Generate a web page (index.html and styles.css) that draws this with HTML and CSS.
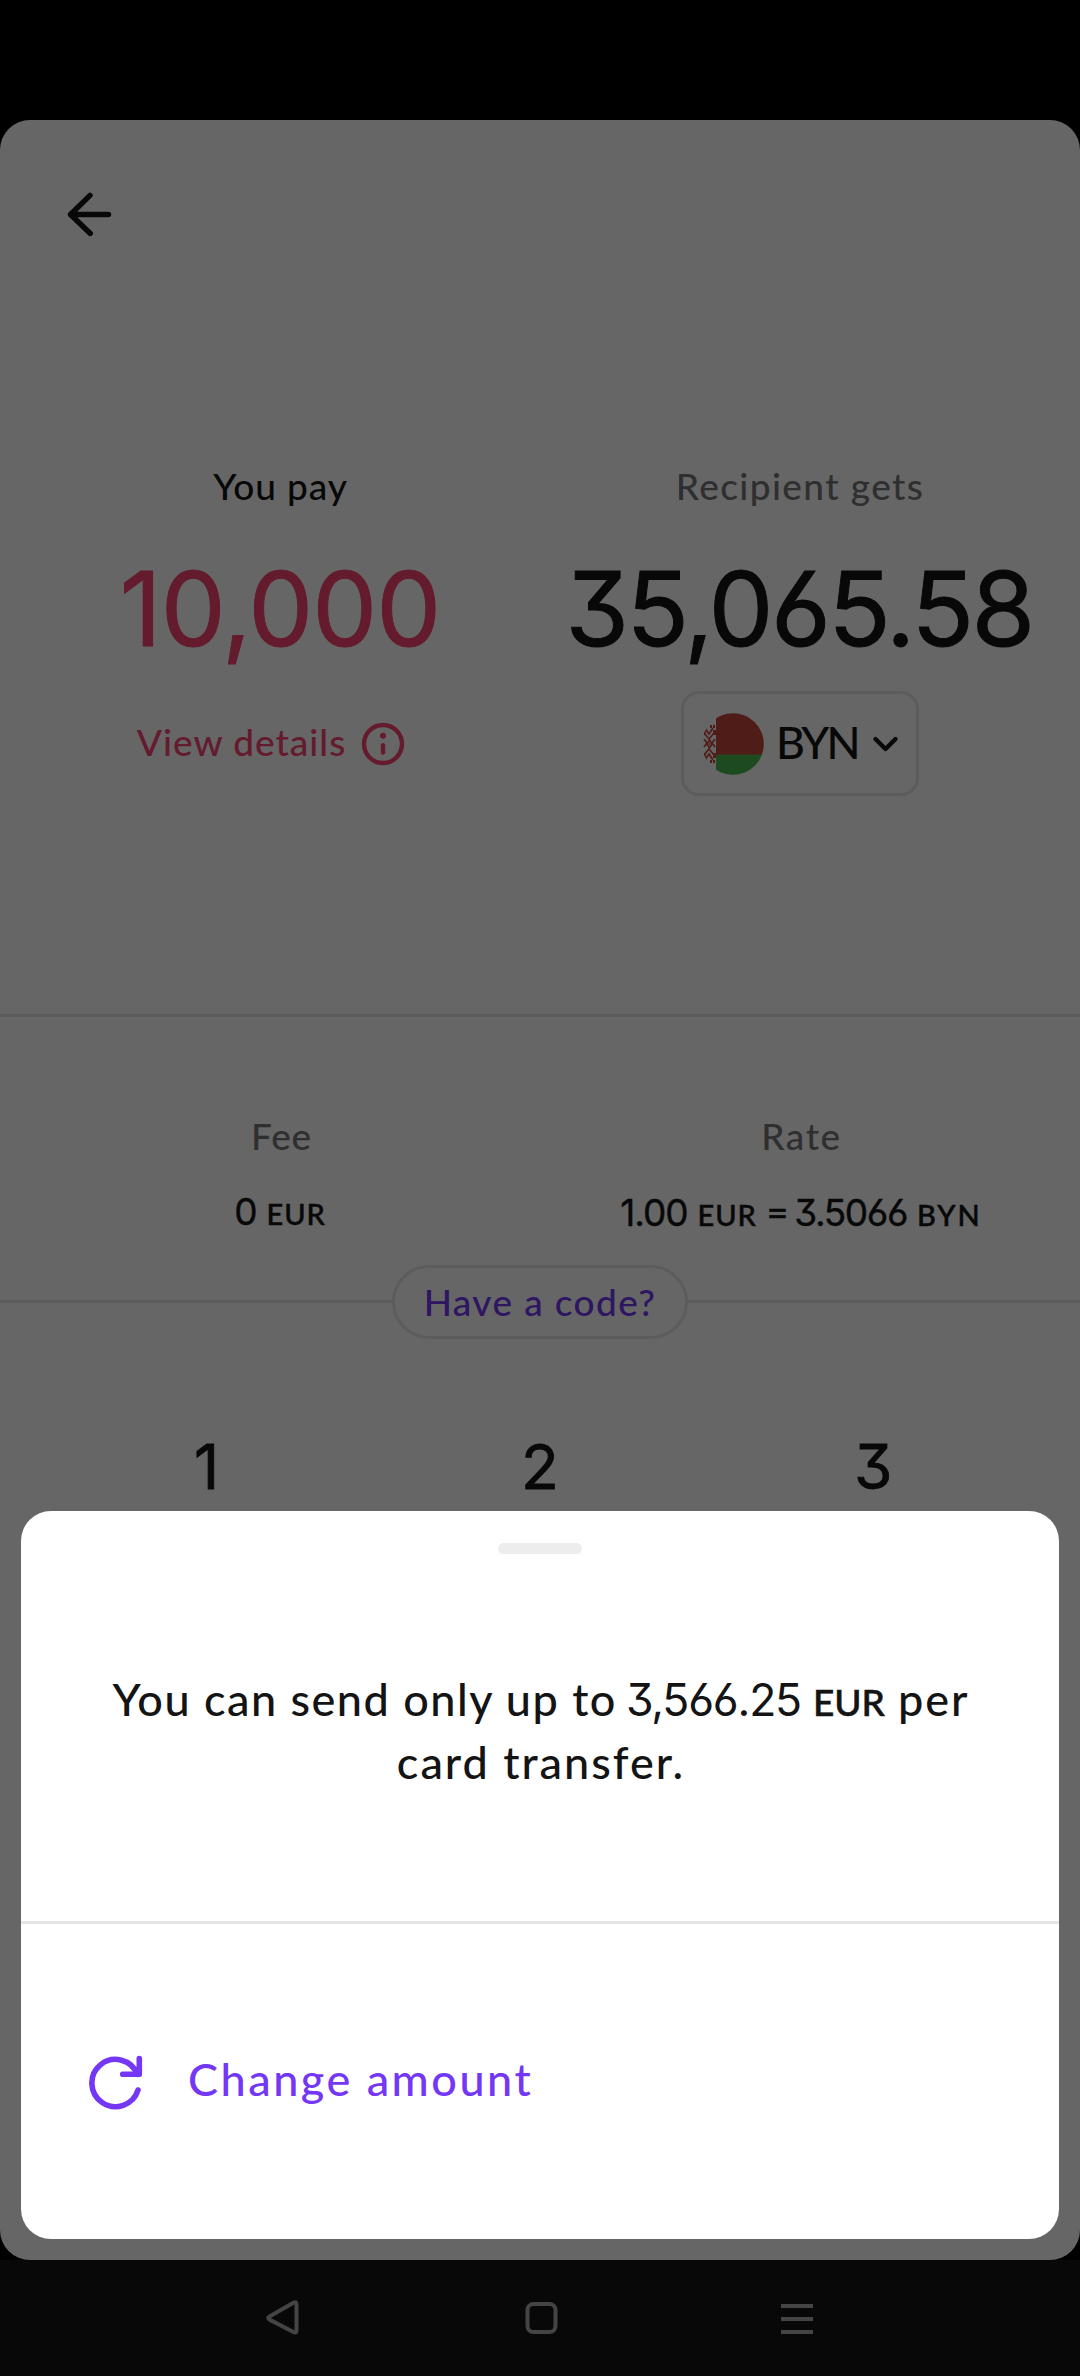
FILE: index.html
```html
<!DOCTYPE html>
<html lang="en">
<head>
<meta charset="utf-8">
<title>Send money</title>
<link rel="stylesheet" href="styles.css">
</head>
<body>
<div class="phone">
  <main class="screen">
    <header class="header">
      <svg class="back" width="48" height="48" viewBox="0 0 48 48"><path d="M42.5 23.5H4.5M24 4.3 4.5 23.5 24.3 42.5"/></svg>
    </header>

    <section class="columns amounts">
      <div class="column">
        <div class="label label-dark you-pay">You pay</div>
        <div class="amount amount-error">10,000</div>
        <div class="details">
          <span class="details-text">View details</span>
          <svg width="44" height="44" viewBox="0 0 44 44"><circle cx="22" cy="22" r="19" fill="none" stroke="currentColor" stroke-width="4.4"/><circle cx="22" cy="13.8" r="3" fill="currentColor"/><path d="M22 23.2v7.4" stroke="currentColor" stroke-width="4.4" stroke-linecap="round"/></svg>
        </div>
      </div>
      <div class="column">
        <div class="label recipient">Recipient gets</div>
        <div class="amount amount-long">35,065.58</div>
        <div class="currency">
          <svg width="62" height="62" viewBox="0 0 62 62">
            <clipPath id="round"><circle cx="31" cy="31" r="30.8"/></clipPath>
            <g clip-path="url(#round)">
              <path fill="#fff" d="M0 0h14v62H0z"/>
              <path fill="#c8463a" d="M14 0h48v42H14z"/>
              <path fill="#4bb852" d="M14 41.6h48V62H14z"/>
              <g fill="none" stroke="#c8463a" stroke-width="1.7">
                <path d="M2 20l5 6 5-6M2 42l5-6 5 6M2 26l3 4-3 4M13 26l-3 4 3 4M3 15l4 6 4-6M3 47l4-6 4 6"/>
                <path d="M7.500 27l2.500 4-2.500 4-2.500-4z"/>
              </g>
              <path fill="#c8463a" d="M8 12h2v3H8zM11 12h2v3h-2zM8 47h2v3H8zM11 47h2v3h-2zM2 17h2v5H2zM11 17h3v5h-3zM2 40h2v5H2zM11 40h3v5h-3zM6.700 30.200h1.600v1.600H6.700z"/>
            </g>
          </svg>
          <span class="currency-code">BYN</span>
          <svg class="chevron" width="28" height="20" viewBox="0 0 28 20"><path d="M3.500 5 13.500 15 23.500 5"/></svg>
        </div>
      </div>
    </section>

    <section class="columns summary">
      <div class="column">
        <div class="label fee">Fee</div>
        <div class="value"><span class="num">0</span><span class="unit unit-eur">EUR</span></div>
      </div>
      <div class="column">
        <div class="label rate">Rate</div>
        <div class="value value-rate"><span class="num">1.00</span><span class="unit unit-eur">EUR</span><span class="equals">=</span><span class="num num-tight">3.5066</span><span class="unit unit-byn">BYN</span></div>
      </div>
    </section>

    <div class="code-row"><div class="rule"></div><div class="code">Have a code?</div><div class="rule"></div></div>

    <div class="keys"><span>1</span><span>2</span><span>3</span></div>
  </main>

  <nav class="nav">
    <svg width="40" height="40" viewBox="0 0 40 40"><path d="M6.500 18.400 30.500 4.700q3-1.500 3 1.500V32.500q0 3-3 1.500L6.500 21.600q-2.500-1.600 0-3.200z"/></svg>
    <svg width="40" height="40" viewBox="0 0 40 40"><rect x="7.500" y="6" width="28" height="28" rx="6"/></svg>
    <svg width="40" height="40" viewBox="0 0 40 40"><path d="M4 8h32M4 21h32M4 34h32"/></svg>
  </nav>

  <div class="scrim"></div>

  <div class="sheet">
    <div class="handle"></div>
    <div class="message">
      <div class="line"><span class="line-text">You can send only up to</span><span class="line-num">3,566.25</span><span class="line-unit">EUR</span><span class="line-per">per</span></div>
      <div class="line line-end">card transfer.</div>
    </div>
    <div class="action">
      <svg width="56" height="56" viewBox="8 8 56 56"><path d="M57.400 28.300A23.600 23.600 0 1 0 58 44M59.300 12.500V28.300H42.700"/></svg>
      <span class="action-text">Change amount</span>
    </div>
  </div>
</div>
</body>
</html>
```
FILE: styles.css
```css
* { box-sizing: border-box; }

body {
  margin: 0;
  background: #000;
  font-family: Lato, "Liberation Sans", sans-serif;
  font-weight: 500;
  color: #141414;
}

svg { display: block; flex: none; }

.phone {
  position: relative;
  width: 1080px;
  height: 2376px;
  padding-top: 120px;
  overflow: hidden;
  background: #000;
}

.screen {
  height: 2140px;
  border-radius: 30px;
  background: #fff;
  overflow: hidden;
}

.header { height: 344px; padding: 71px 0 0 66px; }

.back path {
  fill: none;
  stroke: #141414;
  stroke-width: 5.4;
  stroke-linecap: round;
  stroke-linejoin: round;
}

.columns {
  display: grid;
  grid-template-columns: 520px 520px;
  padding: 0 20px;
}

.column {
  display: flex;
  flex-direction: column;
  align-items: center;
}

.amounts { height: 550px; }

.label {
  font-size: 37px;
  line-height: 44px;
  white-space: nowrap;
  color: #757779;
}
.label-dark { color: #141414; }
.you-pay { padding-left: 1px; letter-spacing: 0.9px; }
.recipient { letter-spacing: 1.4px; }
.fee { letter-spacing: 0.8px; padding-left: 3px; }
.rate { letter-spacing: 1.6px; padding-left: 3px; }

.amount {
  margin-top: 39px;
  font-family: Inter, "Liberation Sans", sans-serif;
  font-weight: 400;
  font-size: 103px;
  line-height: 124px;
  letter-spacing: -1px;
  font-feature-settings: "ss01", "cv09";
  -webkit-text-stroke: 1px currentColor;
}
.amount-error { color: #f74470; }
.amount-long { margin-right: 2px; letter-spacing: -2.5px; }

.details {
  display: flex;
  align-items: center;
  gap: 15px;
  height: 105px;
  margin: 20px 18px 0 0;
  color: #f74470;
}
.details-text {
  padding-bottom: 3px;
  font-size: 37px;
  line-height: 44px;
  letter-spacing: 1px;
}

.currency {
  display: flex;
  align-items: center;
  width: 238px;
  height: 105px;
  margin-top: 20px;
  padding-left: 18px;
  border: 3px solid #e6e6e6;
  border-radius: 18px;
}
.currency-code {
  margin: 0 14px 0 12px;
  padding-bottom: 3px;
  font-size: 44.5px;
  line-height: 54px;
  letter-spacing: -2.7px;
}
.chevron path {
  fill: none;
  stroke: #141414;
  stroke-width: 4.4;
  stroke-linecap: round;
  stroke-linejoin: round;
}

.summary {
  height: 251px;
  padding-top: 97px;
  border-top: 3px solid #e6e6e6;
}

.value {
  display: flex;
  align-items: baseline;
  margin-top: 32px;
  line-height: 44px;
}
.value-rate { padding-left: 2px; }
.num {
  font-family: Inter, "Liberation Sans", sans-serif;
  font-weight: 400;
  font-size: 37px;
  letter-spacing: -1.1px;
  font-feature-settings: "ss01", "cv09";
  -webkit-text-stroke: 0.4px currentColor;
}
.num-tight { margin-left: 6px; letter-spacing: -1.4px; }
.unit {
  margin-left: 10px;
  font-size: 29px;
  -webkit-text-stroke: 0.5px currentColor;
}
.unit-eur { letter-spacing: 1px; }
.unit-byn { letter-spacing: 2px; }
.equals {
  margin-left: 10px;
  font-size: 37px;
  -webkit-text-stroke: 0.5px currentColor;
}

.code-row { display: flex; height: 74px; }
.rule {
  flex: 1;
  height: 3px;
  margin-top: 35px;
  background: #e6e6e6;
}
.code {
  width: 296px;
  height: 74px;
  border: 3px solid #e6e6e6;
  border-radius: 37px;
  font-size: 37px;
  line-height: 68px;
  letter-spacing: 1.4px;
  text-align: center;
  color: #7437f5;
}

.keys {
  display: grid;
  grid-template-columns: repeat(3, 1fr);
  margin-top: 91px;
  padding: 0 40px;
  font-family: Inter, "Liberation Sans", sans-serif;
  font-weight: 400;
  font-size: 62px;
  line-height: 74px;
  text-align: center;
  font-feature-settings: "ss01", "cv09";
  -webkit-text-stroke: 0.8px currentColor;
}

.nav {
  display: flex;
  align-items: center;
  gap: 217px;
  height: 116px;
  padding-left: 263px;
  background: #141414;
}
.nav path, .nav rect {
  fill: none;
  stroke: #aaa;
  stroke-width: 4;
  stroke-linejoin: round;
}

.scrim {
  position: absolute;
  inset: 0;
  background: rgba(0, 0, 0, 0.6);
}

.sheet {
  position: absolute;
  left: 21px;
  top: 1511px;
  width: 1038px;
  height: 728px;
  padding-top: 32px;
  border-radius: 30px;
  background: #fff;
}
.handle {
  width: 84px;
  height: 11px;
  margin: 0 auto;
  border-radius: 5.5px;
  background: #ededed;
}
.message {
  height: 370px;
  padding-top: 114px;
  border-bottom: 3px solid #e5e5e5;
  font-size: 45px;
  line-height: 63px;
}
.line {
  display: flex;
  justify-content: center;
  align-items: baseline;
  height: 63px;
  padding-left: 2px;
  white-space: nowrap;
}
.line-text { letter-spacing: 1.5px; }
.line-num {
  margin-left: 9px;
  font-family: Inter, "Liberation Sans", sans-serif;
  font-weight: 400;
  font-size: 44.5px;
  letter-spacing: -1.2px;
  font-feature-settings: "ss01", "cv09";
}
.line-unit {
  margin-left: 12px;
  font-size: 37px;
  -webkit-text-stroke: 0.6px currentColor;
}
.line-per { margin-left: 13px; letter-spacing: 2px; }
.line-end { letter-spacing: 2px; }

.action {
  display: flex;
  align-items: center;
  gap: 44px;
  height: 315px;
  padding-left: 67px;
  color: #7437f5;
}
.action path {
  fill: none;
  stroke: #7437f5;
  stroke-width: 5.6;
  stroke-linecap: round;
  stroke-linejoin: round;
}
.action-text {
  padding-bottom: 5px;
  font-size: 45px;
  line-height: 54px;
  letter-spacing: 2.5px;
}
```
